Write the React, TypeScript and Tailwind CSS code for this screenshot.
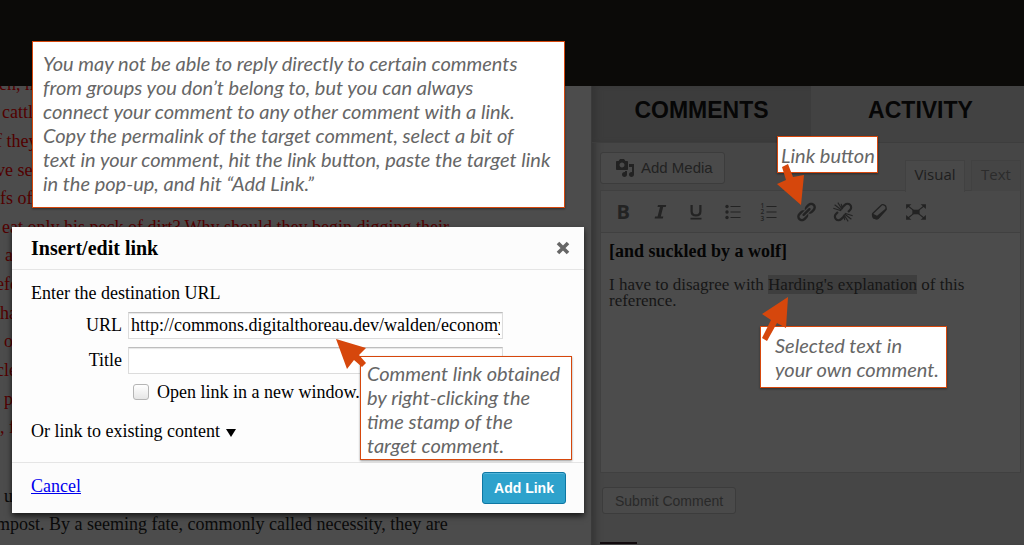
import type { ReactNode } from "react";

const serif = "font-['Liberation_Serif',serif]";
const sans = "font-['Liberation_Sans',sans-serif]";

const passage: { text: string; indent: string }[] = [
  { text: "en, ho", indent: "-ml-px" },
  { text: "cattle", indent: "ml-0.5" },
  { text: "f they", indent: "-ml-1" },
  { text: "ve se", indent: "-ml-1" },
  { text: "fs of", indent: "ml-0" },
  { text: "eat only his peck of dirt? Why should they begin digging their", indent: "ml-0.5" },
  { text: ", a", indent: "-ml-1" },
  { text: "efo", indent: "-ml-1" },
  { text: "ha", indent: "ml-0" },
  { text: "o", indent: "ml-1" },
  { text: "cle", indent: "-ml-1" },
  { text: "p", indent: "ml-1" },
  { text: ", f", indent: "ml-0" },
];

function Glyph({ children, size = "size-5" }: { children: ReactNode; size?: string }) {
  return (
    <svg viewBox="0 0 20 20" className={size} fill="currentColor" aria-hidden="true">
      {children}
    </svg>
  );
}

function MediaIcon() {
  return (
    <Glyph>
      <path d="M13 11V4c0-.55-.45-1-1-1h-1.67L9 1H5L3.67 3H2c-.55 0-1 .45-1 1v7c0 .55.45 1 1 1h10c.55 0 1-.45 1-1zM7 4.5c1.38 0 2.5 1.12 2.5 2.5S8.38 9.5 7 9.5 4.5 8.38 4.5 7 5.62 4.5 7 4.5zM14 6h5v10.5c0 1.38-1.12 2.5-2.5 2.5S14 17.88 14 16.5s1.12-2.5 2.5-2.5c.17 0 .34.02.5.05V9h-3V6zm-4 8.05V13h2v3.5c0 1.38-1.12 2.5-2.5 2.5S7 17.88 7 16.5 8.12 14 9.5 14c.17 0 .34.02.5.05z" />
    </Glyph>
  );
}

function ItalicIcon() {
  return (
    <Glyph>
      <path d="M8 3h8.2l-.5 2h-2.5l-2.4 9.6h2.5l-.5 2H4.600l.5-2h2.5L10 5H7.500z" />
    </Glyph>
  );
}

function UnderlineIcon() {
  return (
    <Glyph>
      <path d="M5.600 3v6.200c0 2.900 1.600 4.200 4.400 4.200s4.400-1.300 4.400-4.200V3" fill="none" stroke="currentColor" strokeWidth="2.200" />
      <path d="M4.500 15.800h11v1.700h-11z" />
    </Glyph>
  );
}

function ListIcon() {
  return (
    <Glyph>
      <circle cx="4" cy="4.5" r="1.7" />
      <circle cx="4" cy="10" r="1.7" />
      <circle cx="4" cy="15.5" r="1.7" />
      <path d="M7.5 4h10v1h-10zM7.5 9.5h10v1h-10zM7.5 15h10v1h-10z" />
    </Glyph>
  );
}

function NumberedListIcon() {
  return (
    <Glyph>
      <g fontFamily="Open Sans, sans-serif" fontSize="6.5" fontWeight="600">
        <text x="1.5" y="6">1</text>
        <text x="1.5" y="12.3">2</text>
        <text x="1.5" y="18.6">3</text>
      </g>
      <path d="M7.5 4h10v1h-10zM7.5 9.5h10v1h-10zM7.5 15h10v1h-10z" />
    </Glyph>
  );
}

function LinkIcon() {
  return (
    <Glyph size="size-[22px]">
      <path d="M17.74 2.76c1.68 1.69 1.68 4.41 0 6.1l-1.53 1.52c-1.12 1.12-2.7 1.47-4.14 1.09l2.62-2.61.76-.77.76-.76c.84-.84.84-2.2 0-3.04-.84-.85-2.2-.85-3.04 0l-.77.76-3.38 3.38c-.37-1.44-.02-3.02 1.1-4.14l1.52-1.53c1.69-1.68 4.42-1.68 6.1 0zM8.59 13.43l5.34-5.34c.42-.42.42-1.1 0-1.52-.44-.43-1.13-.39-1.53 0l-5.33 5.34c-.42.42-.42 1.1 0 1.52.44.43 1.13.39 1.52 0zm-.76 2.29l4.14-4.15c.38 1.44.03 3.02-1.09 4.14l-1.52 1.53c-1.69 1.68-4.41 1.68-6.1 0-1.68-1.68-1.68-4.42 0-6.1l1.53-1.52c1.12-1.12 2.7-1.47 4.14-1.1l-4.14 4.15c-.85.84-.85 2.2 0 3.05.84.84 2.2.84 3.04 0z" />
    </Glyph>
  );
}

function UnlinkIcon() {
  return (
    <Glyph size="size-[22px]">
      <g fill="none" stroke="currentColor" strokeWidth="2">
        <path d="M9 6.200l2.700-2.700a3.300 3.300 0 0 1 4.700 0a3.300 3.300 0 0 1 0 4.700l-1.800 1.800" />
        <path d="M11 13.800l-2.700 2.700a3.300 3.300 0 0 1-4.700 0a3.300 3.300 0 0 1 0-4.700l1.800-1.800" />
      </g>
      <path
        d="M1.200 6.500l7.200 2.300M2.400 3.400l6.200 4.800M5.300 1.500l4 6.300M8.300 2.600l1.400 4.600M18.800 13.500l-7.200-2.300M17.600 16.600l-6.200-4.800M14.700 18.500l-4-6.300M11.700 17.400l-1.400-4.600"
        stroke="currentColor"
        strokeWidth="1"
      />
    </Glyph>
  );
}

function EraserIcon() {
  return (
    <Glyph>
      <path
        d="M12.300 3.200c.5-.6 1.200-.8 1.900-.5l1.500.6c.7.300 1.100.8 1.200 1.500l.3 1.700c.1.700-.1 1.200-.5 1.700l-7.500 8.200c-.5.500-1.100.7-1.800.5l-2.200-.7c-.7-.2-1.100-.7-1.300-1.400l-.4-1.700c-.2-.7 0-1.300.5-1.800z"
        fill="none"
        stroke="currentColor"
        strokeWidth="1.300"
      />
      <path d="M3.500 11.500l4.500 2.200 9-7.500.2 1.500-8 9.200-2.500.3-2.700-1z" />
    </Glyph>
  );
}

function FullscreenIcon() {
  return (
    <Glyph size="size-[22px]">
      <path d="M6.700 7.900h6.600v4.200H6.700zM1 3h4.800L1 7.200zM19 3h-4.800L19 7.200zM1 17h4.800L1 12.800zM19 17h-4.800l4.800-4.200z" />
      <path d="M2.500 4.300l5 4M17.500 4.300l-5 4M2.500 15.700l5-4M17.500 15.700l-5-4" stroke="currentColor" strokeWidth="1.100" />
    </Glyph>
  );
}

const tools: { name: string; icon: ReactNode }[] = [
  { name: "Bold", icon: <span className="font-['Open_Sans',sans-serif] text-[20px] font-bold leading-5">B</span> },
  { name: "Italic", icon: <ItalicIcon /> },
  { name: "Underline", icon: <UnderlineIcon /> },
  { name: "Bulleted list", icon: <ListIcon /> },
  { name: "Numbered list", icon: <NumberedListIcon /> },
  { name: "Insert/edit link", icon: <LinkIcon /> },
  { name: "Unlink", icon: <UnlinkIcon /> },
  { name: "Clear formatting", icon: <EraserIcon /> },
  { name: "Fullscreen", icon: <FullscreenIcon /> },
];

function Article() {
  return (
    <article className={`${serif} min-w-0 overflow-hidden whitespace-nowrap bg-[#4c4c4c] text-[18px]`}>
      <p className="-mt-4 grid h-[372px] auto-rows-fr items-center text-[#520000]">
        {passage.map((line) => (
          <span key={line.text} className={line.indent}>
            {line.text}
          </span>
        ))}
      </p>
      <p className="mt-10 leading-7 text-[#0a0a0a]">
        <span className="ml-1 block">u</span>
        <span className="-ml-1 block">mpost. By a seeming fate, commonly called necessity, they are</span>
      </p>
    </article>
  );
}

function Sidebar() {
  return (
    <aside className="min-w-0 border-l border-[#3a3a3a] bg-[#464646] shadow-[inset_7px_0_6px_-3px_#373737]">
      <nav
        className={`${sans} grid h-[57px] grid-cols-[219fr_213fr] border-b border-[#3d3d3d] text-[23px] font-bold text-[#060606]`}
      >
        <button className="bg-[#3c3c3c] pb-2 shadow-[inset_7px_0_6px_-3px_#353535]">COMMENTS</button>
        <button className="bg-[#424242] pb-2 pl-1.5">ACTIVITY</button>
      </nav>
      <div className="pl-2 pr-[3px] pt-[9px]">
        <div className="flex items-start justify-between">
          <button
            className={`${sans} flex h-8 items-center gap-1.5 rounded-[3px] border border-[#3c3c3c] bg-[#4a4a4a] px-3.5 pr-[11px] text-[15px] text-[#222]`}
          >
            <MediaIcon />
            Add Media
          </button>
          <div className="mt-2 flex gap-1.5 font-['Open_Sans',sans-serif] text-[15px]">
            <button className="-mb-px h-8 w-[60px] border border-b-0 border-[#414141] bg-[#494949] pb-1 text-[#1e1e1e]">
              Visual
            </button>
            <button className="h-[31px] w-[50px] border border-b-0 border-[#414141] bg-[#454545] pb-1 text-[#2c2c2c]">
              Text
            </button>
          </div>
        </div>
        <div className="-mt-px border border-[#404040] bg-[#494949]">
          <div className="grid h-[41px] w-[333px] grid-cols-9 items-center pl-1 text-[#232323]">
            {tools.map((tool) => (
              <button key={tool.name} aria-label={tool.name} className="flex items-center justify-center">
                {tool.icon}
              </button>
            ))}
          </div>
        </div>
        <div className={`${serif} h-[240px] border border-t-0 border-[#404040] bg-[#4c4c4c] px-2 pt-2`}>
          <h2 className="text-[18px] font-bold leading-5 text-[#050505]">[and suckled by a wolf]</h2>
          <p className="mt-4 text-[17px] leading-4 text-[#161616]">
            I have to disagree with <mark className="bg-[#3e3e3e] text-[#161616]">Harding's explanation</mark> of this
            reference.
          </p>
        </div>
        <button
          className={`${sans} ml-0.5 mt-[14px] block h-[27px] rounded-[3px] border border-[#3c3c3c] bg-[#4a4a4a] px-3 text-[14px] leading-5 text-[#292929]`}
        >
          Submit Comment
        </button>
      </div>
      <div className="ml-2 mt-7 h-0.5 w-[37px] bg-[#110a0d]" />
    </aside>
  );
}

function LinkDialog() {
  const field =
    "h-[27px] min-w-0 flex-1 border border-[#dcdcdc] border-t-[#bdbdbd] bg-white px-0.5 text-[18px] shadow-[inset_0_1px_1px_#0000001a] outline-none";
  return (
    <section
      role="dialog"
      aria-labelledby="dialog-title"
      className={`${serif} absolute left-3 top-[227px] w-[572px] bg-[#fdfdfd] text-[18px] text-black shadow-[0_3px_6px_#000000b3]`}
    >
      <header className="flex h-[43px] items-center justify-between border-b border-[#e5e5e5] bg-[#fcfcfc] pl-[19px] pr-3.5">
        <h1 id="dialog-title" className="text-[20px] font-bold">
          Insert/edit link
        </h1>
        <button aria-label="Close" className="text-[#666]">
          <svg viewBox="0 0 14 14" className="size-3.5" stroke="currentColor" strokeWidth="3.6" aria-hidden="true">
            <path d="M2 2l10 10M12 2L2 12" />
          </svg>
        </button>
      </header>
      <div className="h-[192px] pl-[19px] pr-[81px] pt-3">
        <p className="leading-[22px]">Enter the destination URL</p>
        <div className="mt-2 flex items-center">
          <label htmlFor="url" className="w-[97px] pr-1.5 text-right">
            URL
          </label>
          <input id="url" className={field} defaultValue="http://commons.digitalthoreau.dev/walden/economy" />
        </div>
        <div className="mt-2 flex items-center">
          <label htmlFor="title" className="w-[97px] pr-1.5 text-right">
            Title
          </label>
          <input id="title" className={field} />
        </div>
        <div className="mt-1.5 flex items-center gap-2 pl-[102px]">
          <input
            id="new-window"
            type="checkbox"
            className="size-4 appearance-none rounded-[3px] border border-[#b5b5b5] bg-linear-to-b from-white to-[#e6e6e6]"
          />
          <label htmlFor="new-window" className="leading-6">
            Open link in a new window.
          </label>
        </div>
        <button className="mt-[15px] flex items-center gap-1.5 leading-6">
          Or link to existing content
          <svg viewBox="0 0 10 8" className="mt-1 h-2 w-2.5" aria-hidden="true">
            <path d="M0 0h10L5 8z" />
          </svg>
        </button>
      </div>
      <footer className="flex h-[51px] items-center justify-between border-t border-[#e5e5e5] bg-[#fcfcfc] pl-[19px] pr-[18px]">
        <a href="#cancel" className="mb-1 text-[#0000ee] underline">
          Cancel
        </a>
        <button
          className={`${sans} h-8 w-[84px] rounded-[3px] border border-[#0e77a3] bg-[#2ea2cc] text-[14px] font-bold text-white shadow-[inset_0_1px_0_#78c8e680]`}
        >
          Add Link
        </button>
      </footer>
    </section>
  );
}

function Callout({ place, children }: { place: string; children: ReactNode }) {
  return (
    <div
      className={`absolute whitespace-nowrap border border-[#d6470c] bg-white font-['Lato',sans-serif] text-[20px] italic leading-6 text-[#666] shadow-[0_1px_2px_#00000066] ${place}`}
    >
      {children}
    </div>
  );
}

export default function App() {
  return (
    <div className="relative flex min-h-screen flex-col overflow-hidden bg-[#464646]">
      <header className="h-[86px] bg-[#0b0a08] shadow-[0_1px_3px_#00000099]" />
      <main className="grid flex-1 grid-cols-[591fr_433fr]">
        <Article />
        <Sidebar />
      </main>
      <LinkDialog />
      <Callout place="left-8 top-[41px] h-[167px] w-[533px] px-2.5 pt-[9px]">
        You may not be able to reply directly to certain comments
        <br />
        from groups you don’t belong to, but you can always
        <br />
        connect your comment to any other comment with a link.
        <br />
        Copy the permalink of the target comment, select a bit of
        <br />
        text in your comment, hit the link button, paste the target link
        <br />
        in the pop-up, and hit “Add Link.”
      </Callout>
      <Callout place="left-[777px] top-[136px] h-[37px] w-[101px] px-[3px] pt-1.5">Link button</Callout>
      <Callout place="left-[360px] top-[356px] h-[104px] w-[212px] px-1.5 pt-1">
        Comment link obtained
        <br />
        by right-clicking the
        <br />
        time stamp of the
        <br />
        target comment.
      </Callout>
      <Callout place="left-[760px] top-[326px] h-[62px] w-[187px] px-3.5 pt-1.5">
        Selected text in
        <br />
        your own comment.
      </Callout>
      <svg
        viewBox="0 0 1024 545"
        className="pointer-events-none absolute left-0 top-0 h-[545px] w-[1024px] max-w-none fill-[#d6470c]"
        aria-hidden="true"
      >
        <path d="M782 167l6-3 5 13 11-2-3 30-24-21 9-4z" />
        <path d="M788 297l-2 31-9-5-10 18-5-3 9-18-9-6z" />
        <path d="M336 339l30 9-7 7 7 8-4 4-8-7-7 9z" />
      </svg>
    </div>
  );
}
